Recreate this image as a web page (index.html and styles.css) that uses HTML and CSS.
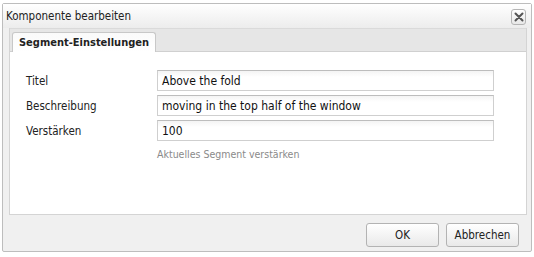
FILE: index.html
```html
<!DOCTYPE html>
<html>
<head>
<meta charset="utf-8">
<link rel="stylesheet" href="styles.css">
</head>
<body>
<div class="window">
  <div class="titlebar">
    <span class="title">Komponente bearbeiten</span>
    <span class="close"><svg width="10" height="10" viewBox="0 0 10 10"><path d="M1.5 1.5 L8.5 8.5 M8.5 1.5 L1.5 8.5" stroke="#555" stroke-width="2" stroke-linecap="round"/></svg></span>
  </div>
  <div class="body">
    <div class="panel">
      <div class="tabstrip">
        <div class="tab">Segment-Einstellungen</div>
      </div>
      <div class="content">
        <div class="form">
          <label class="lbl">Titel</label>
          <div class="field">Above the fold</div>
          <label class="lbl">Beschreibung</label>
          <div class="field">moving in the top half of the window</div>
          <label class="lbl">Verstärken</label>
          <div class="field">100</div>
          <span></span>
          <div class="hint">Aktuelles Segment verstärken</div>
        </div>
      </div>
    </div>
    <div class="footer">
      <button class="btn">OK</button>
      <button class="btn">Abbrechen</button>
    </div>
  </div>
</div>
</body>
</html>
```

FILE: styles.css
```css
html, body {
  margin: 0;
  padding: 0;
  background: #ffffff;
}
body {
  font-family: "DejaVu Sans Condensed", "DejaVu Sans", Tahoma, sans-serif;
  font-size: 11px;
  color: #222;
}
.window {
  margin: 3px 2px 3px 2px;
  height: 249px;
  border: 1px solid #bdbdbd;
  border-radius: 2px;
  display: flex;
  flex-direction: column;
  background: #f0f0f0;
  box-sizing: border-box;
}
.titlebar {
  height: 24px;
  flex: none;
  display: flex;
  align-items: center;
  justify-content: space-between;
  padding: 0 5px 0 3px;
  background: linear-gradient(#ffffff, #ececec);
}
.title {
  font-size: 11.5px;
  color: #222;
}
.close {
  width: 13px;
  height: 14px;
  border: 1px solid #b5b5b5;
  border-radius: 3px;
  background: linear-gradient(#ffffff, #e8e8e8);
  display: flex;
  align-items: center;
  justify-content: center;
  margin-top: 2px;
}
.body {
  flex: 1;
  display: flex;
  flex-direction: column;
  padding: 0 4px 0 6px;
}
.panel {
  height: 186px;
  border: 1px solid #d4d4d4;
  border-top: none;
  display: flex;
  flex-direction: column;
  background: #fff;
}
.tabstrip {
  height: 24px;
  background: #e6e6e6;
  border-top: 1px solid #dadada;
  border-bottom: 1px solid #d0d0d0;
  padding: 4px 0 0 2px;
  box-sizing: border-box;
  display: flex;
  align-items: flex-end;
}
.tab {
  width: 144px;
  height: 20px;
  box-sizing: border-box;
  border: 1px solid #c8c8c8;
  border-bottom: none;
  border-radius: 3px 3px 0 0;
  background: linear-gradient(#fafafa, #ffffff);
  font-weight: bold;
  font-size: 11px;
  color: #222;
  display: flex;
  align-items: center;
  justify-content: center;
  margin-bottom: -1px;
}
.content {
  flex: 1;
  padding: 18px 0 0 16px;
}
.form {
  display: grid;
  grid-template-columns: 131px 337px;
  row-gap: 4px;
  align-items: center;
}
.lbl {
  font-size: 11.5px;
  color: #222;
}
.field {
  height: 21px;
  box-sizing: border-box;
  border: 1px solid #cfcfcf;
  border-top-color: #bdbdbd;
  background: linear-gradient(#f4f4f4, #ffffff 6px);
  padding: 0 4px;
  line-height: 20px;
  font-size: 12px;
  color: #111;
}
.hint {
  font-size: 10.5px;
  color: #8a8a8a;
  padding-top: 3px;
}
.footer {
  flex: 1;
  display: flex;
  justify-content: flex-end;
  align-items: flex-start;
  gap: 7px;
  padding: 8px 8px 0 0;
}
.btn {
  width: 73px;
  height: 24px;
  border: 1px solid #b3b3b3;
  border-radius: 3px;
  background: linear-gradient(#ffffff, #e9e9e9);
  font-family: "DejaVu Sans Condensed", "DejaVu Sans", Tahoma, sans-serif;
  font-size: 11.5px;
  color: #222;
  padding: 0;
}
```
